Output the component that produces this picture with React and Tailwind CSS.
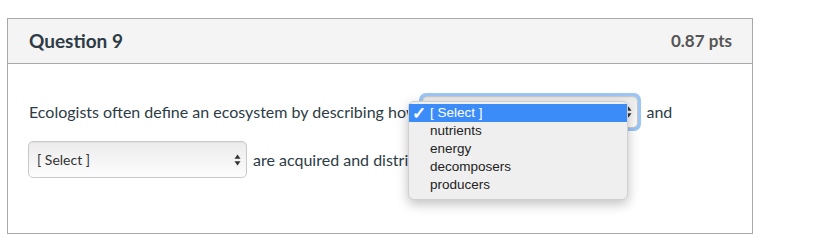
import React from "react";

function Arrows() {
  return (
    <svg width="7" height="12" viewBox="0 0 7 12" className="shrink-0">
      <path d="M3.5 0.5 L6.5 4.8 L0.5 4.8 Z" fill="#333" />
      <path d="M3.5 11.5 L6.5 7.2 L0.5 7.2 Z" fill="#333" />
    </svg>
  );
}

function SelectBox({ label, className }) {
  return (
    <div
      className={
        "flex items-center justify-between rounded-[5px] border border-[#c9c9c9] bg-gradient-to-b from-[#ebebeb] to-[#fdfdfd] pl-[8px] pr-[5px] shadow-[inset_0_1px_1px_rgba(0,0,0,0.04)] " +
        (className || "")
      }
    >
      <span className="text-[14px] text-[#333]">{label}</span>
      <Arrows />
    </div>
  );
}

export default function App() {
  return (
    <div className="w-[834px] h-[250px] bg-white pl-[7px] pt-[18px] font-['Lato','Noto_Sans',sans-serif]">
      <div className="relative w-[746px] border border-[#aaaaaa]">
        <div className="flex h-[45px] items-center justify-between border-b border-[#aaaaaa] bg-[#f4f4f4] pl-[21px] pr-[20px]">
          <span className="text-[19px] font-bold text-[#2d3b45]">Question 9</span>
          <span className="text-[17px] font-bold text-[#555]">0.87 pts</span>
        </div>
        <div className="relative h-[169px] pl-[21px] pt-[29px]">
          <div className="flex h-[38px] items-center text-[16px] text-[#2d3b45]">
            <span>Ecologists often define an ecosystem by describing how</span>
            <div className="ml-[1px] w-[222px] h-[38px] rounded-[7px] bg-[#9cc6f5] p-[3px]">
              <SelectBox label="" className="h-full w-full border-[#8fb6e8]" />
            </div>
            <span className="ml-[5px]">and</span>
          </div>
          <div className="mt-[10px] flex h-[37px] items-center text-[16px] text-[#2d3b45]">
            <SelectBox label="[ Select ]" className="h-[37px] w-[219px] -ml-[1px]" />
            <span className="ml-[6px]">are acquired and distributed</span>
          </div>

          <div className="absolute left-[400px] top-[37px] w-[220px] rounded-[6px] bg-[#efefef] border border-[#d0d0d0] pt-[2px] pb-[5px] shadow-[0_4px_12px_rgba(0,0,0,0.25)] font-['Liberation_Sans','Helvetica',sans-serif] text-[13.5px] text-[#222]">
            <div className="flex h-[18px] items-center bg-[#3b8cf8] text-white">
              <span className="w-[21px] pl-[3px] text-[17px] font-bold leading-none">✓</span>
              <span>[ Select ]</span>
            </div>
            {["nutrients", "energy", "decomposers", "producers"].map((t) => (
              <div key={t} className="flex h-[18px] items-center pl-[21px]">
                {t}
              </div>
            ))}
          </div>
        </div>
      </div>
    </div>
  );
}
